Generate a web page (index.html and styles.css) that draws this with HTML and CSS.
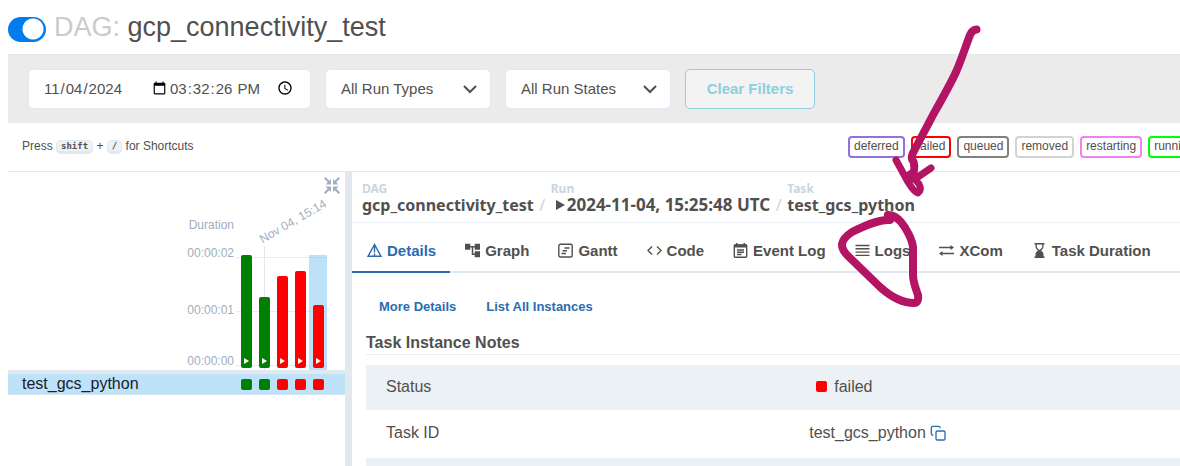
FILE: index.html
```html
<!DOCTYPE html>
<html lang="en">
<head>
<meta charset="utf-8">
<title>gcp_connectivity_test</title>
<link rel="stylesheet" href="styles.css">
</head>
<body>
<header class="title-bar">
  <input class="toggle" type="checkbox" role="switch" aria-label="Pause or unpause DAG" checked>
  <h1 class="title"><span class="title-prefix">DAG:</span> gcp_connectivity_test</h1>
</header>

<form class="filters">
  <div class="date-box">
    <input class="date-input" type="date" aria-label="Base date" value="2024-11-04">
    <input class="time-input" type="time" aria-label="Base time" step="1" value="15:32:26">
  </div>
  <div class="select-box">
    <select class="select" aria-label="Run types"><option>All Run Types</option></select>
    <svg class="chevron" viewBox="0 0 14 9"><path d="M1 1l6 6 6-6"/></svg>
  </div>
  <div class="select-box">
    <select class="select" aria-label="Run states"><option>All Run States</option></select>
    <svg class="chevron" viewBox="0 0 14 9"><path d="M1 1l6 6 6-6"/></svg>
  </div>
  <button class="clear" type="button">Clear Filters</button>
</form>

<div class="legend">
  <p class="shortcuts">Press <kbd class="key">shift</kbd> + <kbd class="key">/</kbd> for Shortcuts</p>
  <div class="states">
    <span class="state deferred">deferred</span>
    <span class="state failed">failed</span>
    <span class="state queued">queued</span>
    <span class="state removed">removed</span>
    <span class="state restarting">restarting</span>
    <span class="state running">running</span>
  </div>
</div>

<main class="panes">
  <section class="grid-pane">
    <div class="grid-tools">
      <button class="collapse" type="button" aria-label="Collapse">
        <svg viewBox="0 0 16 17" width="16" height="17"><path class="tips" d="M7 2v5.500H1.500zM9 2v5.500h5.500zM7 15V9.500H1.500zM9 15V9.500h5.500z"/><path class="rays" d="M.700.700l4 4M15.300.700l-4 4M.700 16.300l4-4M15.300 16.300l-4-4"/></svg>
      </button>
    </div>
    <div class="chart">
      <div class="axis">
        <span>Duration</span>
        <span>00:00:02</span>
        <span>00:00:01</span>
        <span>00:00:00</span>
      </div>
      <div class="plot">
        <div class="lines"><i class="line"></i><i class="line"></i><i class="line"></i></div>
        <span class="run-date">Nov 04, 15:14</span>
        <div class="slot"><button class="bar ok" type="button" aria-label="Run 1" style="height:113px"></button></div>
        <div class="slot ticked"><button class="bar ok" type="button" aria-label="Run 2" style="height:71px"></button></div>
        <div class="slot"><button class="bar bad" type="button" aria-label="Run 3" style="height:92px"></button></div>
        <div class="slot"><button class="bar bad" type="button" aria-label="Run 4" style="height:97px"></button></div>
        <div class="slot selected"><button class="bar bad" type="button" aria-label="Run 5" style="height:63px"></button></div>
      </div>
    </div>
    <div class="task-row">
      <span class="task-name">test_gcs_python</span>
      <div class="task-cells">
        <i class="cell ok"></i><i class="cell ok"></i><i class="cell bad"></i><i class="cell bad"></i><i class="cell bad"></i>
      </div>
    </div>
  </section>

  <section class="detail-pane">
    <nav class="crumbs" aria-label="Breadcrumb">
      <a class="crumb" href="#dag"><span class="crumb-label">DAG</span><span class="crumb-text">gcp_connectivity_test</span></a>
      <span class="slash">/</span>
      <a class="crumb" href="#run"><span class="crumb-label">Run</span><span class="crumb-text crumb-run"><svg class="play" viewBox="0 0 9 10"><path d="M0 0l9 5-9 5z"/></svg>2024-11-04, 15:25:48 UTC</span></a>
      <span class="slash">/</span>
      <a class="crumb" href="#task"><span class="crumb-label">Task</span><span class="crumb-text">test_gcs_python</span></a>
    </nav>
    <div class="tabs" role="tablist">
      <button class="tab active" role="tab" aria-selected="true"><svg viewBox="0 0 15 15"><path class="stroke" d="M7.500 1.500L1 13.300h13zM7.500 3v6.500"/><path class="stroke" d="M7.500 10.500v3"/></svg>Details</button>
      <button class="tab" role="tab"><svg viewBox="2 2 20 20"><path d="M22 11V3h-7v3H9V3H2v8h7V8h2v10h4v3h7v-8h-7v3h-2V8h2v3z"/></svg>Graph</button>
      <button class="tab" role="tab"><svg viewBox="0 0 15 15"><rect class="stroke" x=".8" y="1.300" width="13.400" height="12.700" rx="1.500"/><path class="stroke" d="M6.500 5h5M4.500 7.700h4.500M3.500 10.500H8"/></svg>Gantt</button>
      <button class="tab" role="tab"><svg viewBox="0 0 15 15"><path class="stroke" d="M5 3.500L1 7.500l4 4M10 3.500l4 4-4 4"/></svg>Code</button>
      <button class="tab" role="tab"><svg viewBox="0 0 15 15"><rect class="stroke" x="1.300" y="2" width="12.400" height="12.200" rx="1"/><path d="M1 1.500h13v3H1zM3 0h1.500v2H3zM10.500 0H12v2h-1.500z"/><path class="stroke" d="M4 7h7M4 9.300h7M4 11.500h4.500"/></svg>Event Log</button>
      <button class="tab" role="tab"><svg viewBox="0 0 15 15"><path class="stroke" d="M.5 2.500h14M.5 5.800h14M.5 9.100h14M.5 12.400h14"/></svg>Logs</button>
      <button class="tab" role="tab"><svg viewBox="0 0 15 15"><path class="stroke" d="M0 4.500h13M2 10.500h13"/><path d="M11.500 2l3.500 2.500L11.500 7zM3.500 8L0 10.500 3.500 13z"/></svg>XCom</button>
      <button class="tab" role="tab"><svg viewBox="0 0 15 15"><path d="M2.500 0h10v1.500h-1V4c0 1.500-1.500 2.700-2.500 3.500 1 .8 2.500 2 2.500 3.500v2.500h1V15h-10v-1.500h1V11c0-1.500 1.500-2.700 2.500-3.500C5 6.700 3.500 5.500 3.500 4V1.500h-1zM4.800 1.500V4c0 .8 1 1.700 2.700 3 1.700-1.300 2.700-2.200 2.700-3V1.500z" fill-rule="evenodd"/></svg>Task Duration</button>
    </div>
    <div class="detail-body">
      <div class="links">
        <a class="link" href="#more">More Details</a>
        <a class="link" href="#list">List All Instances</a>
      </div>
      <h2 class="notes">Task Instance Notes</h2>
      <table class="facts">
        <tbody>
          <tr><th scope="row">Status</th><td><span class="value"><i class="cell bad status-dot"></i>failed</span></td></tr>
          <tr><th scope="row">Task ID</th><td><span class="value">test_gcs_python<button class="copy" type="button" aria-label="Copy"><svg viewBox="0 0 24 24" width="16" height="16"><rect x="9" y="9" width="13.500" height="13.500" rx="2"/><path d="M5 15H4a2 2 0 0 1-2-2V4a2 2 0 0 1 2-2h9a2 2 0 0 1 2 2v1"/></svg></button></span></td></tr>
          <tr class="next-row"><td></td><td></td></tr>
        </tbody>
      </table>
    </div>
  </section>
</main>

<svg class="ink" viewBox="0 0 1180 466" width="1180" height="466" aria-hidden="true">
  <path d="M976.500 29.500Q972 30 970 35C965 48 961 61 956 72C950 85 942 99 933 115L914 151Q911 156 912 159C915 163 915 170 912 178"/>
  <path class="ink-head" d="M896 160L908 182Q914 192 918 193Q922 190 919 184Q916 180 913 178M931 168L915 179L910 174"/>
  <path d="M888 215L890 220C878 219 862 227 852 232C840 240 839 247 848 256L880 287C890 296 901 303 914 303Q919 303 918 295C915 286 913 282 913 275L913 247C912 239 906 228 901 222Q895 215 888 215"/>
</svg>
</body>
</html>
```
FILE: styles.css
```css
* { box-sizing: border-box; }

body {
  position: relative;
  display: flex;
  flex-direction: column;
  min-height: 100vh;
  margin: 0;
  padding-left: 8px;
  overflow: hidden;
  background: #fff;
  color: #51504f;
  font-family: "Liberation Sans", Arial, sans-serif;
  font-size: 16px;
}

button { font-family: inherit; cursor: pointer; }
a { color: inherit; text-decoration: none; }

.title-bar {
  display: flex;
  align-items: center;
  gap: 8px;
  height: 54px;
}
.toggle {
  appearance: none;
  width: 38px;
  height: 25px;
  margin: 4px 0 0;
  border-radius: 13px;
  background: radial-gradient(circle at 25px 12px, #fff 10px, #017cee 11px);
}
.title { margin: 0; font-size: 27px; font-weight: 400; line-height: 32px; }
.title-prefix { color: #cbcbcb; }

.filters {
  display: flex;
  align-items: center;
  gap: 14px;
  height: 69px;
  padding-left: 20px;
  border-top: 1px solid #e2e8f0;
  background: #ebebeb;
}
.date-box, .select-box {
  display: flex;
  align-items: center;
  height: 40px;
  border: 1px solid #e2e8f0;
  border-radius: 5px;
  background: #fff;
}
.date-box { width: 283px; padding: 0 14px 2px; }
.date-input, .time-input {
  padding: 0;
  border: 0;
  background: none;
  color: inherit;
  font: 15px "Liberation Sans", Arial, sans-serif;
}
.date-input { width: 126px; }
.time-input { width: 127px; }
.select-box { position: relative; width: 166px; }
.select {
  appearance: none;
  width: 100%;
  height: 100%;
  padding: 0 15px 2px;
  border: 0;
  background: none;
  color: inherit;
  font: 15px "Liberation Sans", Arial, sans-serif;
}
.chevron {
  position: absolute;
  right: 13px;
  width: 14px;
  height: 9px;
  fill: none;
  stroke: #51504f;
  stroke-width: 2;
  pointer-events: none;
}
.clear {
  width: 130px;
  height: 40px;
  padding-bottom: 3px;
  border: 1px solid #8cd0dc;
  border-radius: 5px;
  background: #f3f3f3;
  color: #8cd0dc;
  font-size: 15px;
  font-weight: 700;
}

.legend {
  display: grid;
  grid-template-columns: 1fr 332px;
  align-items: center;
  height: 49px;
  padding-left: 14px;
  border-bottom: 1px solid #e2e8f0;
  font-size: 12px;
}
.shortcuts { margin: 0; padding-bottom: 2px; line-height: 16px; }
.key {
  padding: 0 4px;
  border: 1px solid #e2e8f0;
  border-bottom-width: 3px;
  border-radius: 5px;
  background: #edf2f7;
  font: 700 9px "DejaVu Sans Mono", monospace;
  vertical-align: 1px;
}
.states { display: flex; gap: 6px; overflow: hidden; }
.state {
  flex: none;
  height: 22px;
  padding: 0 4px;
  border: 2px solid;
  border-radius: 4px;
  line-height: 17px;
}
.deferred { border-color: mediumpurple; }
.failed { border-color: red; }
.queued { border-color: gray; }
.removed { border-color: lightgrey; }
.restarting { border-color: violet; }
.running { border-color: lime; }

.panes { display: flex; flex: 1; }
.grid-pane { flex: 0 0 344px; border-right: 7px solid #e2e8f0; }
.grid-tools { display: flex; justify-content: flex-end; padding: 5px 5px 0 0; }
.collapse { display: flex; padding: 0; border: 0; background: none; }
.tips { fill: #a0aec0; }
.rays { stroke: #a0aec0; stroke-width: 2; }

.chart {
  display: flex;
  justify-content: flex-end;
  gap: 2px;
  height: 180px;
  padding-right: 18px;
  border-bottom: 4px solid #e2e8f0;
  color: #a0aec0;
  font-size: 12px;
}
.axis {
  display: grid;
  grid-template-rows: 28px 57px 51px 16px;
  align-content: end;
  padding-bottom: 1px;
  line-height: 16px;
  text-align: right;
}
.plot { position: relative; display: flex; align-items: flex-end; padding-left: 1px; }
.lines {
  position: absolute;
  inset: auto 0 4px 0;
  display: flex;
  flex-direction: column;
  justify-content: space-between;
  height: 109px;
}
.line { height: 1px; background: #e6eaf1; }
.run-date {
  position: absolute;
  left: 28px;
  top: 38px;
  line-height: 14px;
  white-space: nowrap;
  transform: rotate(-30deg);
  transform-origin: 0 100%;
}
.slot {
  position: relative;
  display: flex;
  align-items: flex-end;
  justify-content: center;
  width: 18px;
  height: 115px;
  padding-bottom: 2px;
}
.slot.selected { background: rgba(144, 205, 244, .6); }
.ticked { height: 124px; background: linear-gradient(#e2e8f0, #e2e8f0) center / 1px 100% no-repeat; }
.ok { background: green; }
.bad { background: red; }
.bar {
  display: flex;
  align-items: flex-end;
  justify-content: center;
  width: 11px;
  padding: 0 0 4px 1px;
  border: 0;
  border-radius: 2px;
}
.bar::after {
  content: "";
  border: solid transparent;
  border-width: 3px 0 3px 5px;
  border-left-color: #fff;
}
.task-row {
  display: flex;
  align-items: center;
  justify-content: space-between;
  height: 21px;
  padding: 0 18px 0 14px;
  border-bottom: 1px solid #d5e5f1;
  background: #bee3f8;
  color: #1a202c;
}
.task-name { line-height: 18px; }
.task-cells { display: flex; gap: 7px; padding-right: 3px; }
.cell { width: 11px; height: 11px; border-radius: 2px; }

.detail-pane { flex: 1; min-width: 0; }
.crumbs {
  display: flex;
  align-items: flex-end;
  height: 51px;
  padding: 0 10px 8px;
  border-bottom: 1px solid #edf2f7;
  font: 700 16px/18px "Noto Sans", "Open Sans", sans-serif;
  white-space: nowrap;
}
.crumb { display: flex; flex-direction: column; }
.crumb-label { color: #cbd5e0; font-size: 12px; line-height: 14px; }
.crumb-run { display: flex; align-items: center; gap: 2px; padding-left: 5px; font-size: 17px; }
.play { width: 9px; height: 10px; fill: #51504f; }
.slash { width: 17px; color: #cbd5e0; font-weight: 400; text-align: center; }

.tabs { display: flex; height: 50px; border-bottom: 2px solid #e2e8f0; }
.tab {
  display: flex;
  flex: none;
  align-items: center;
  gap: 5px;
  height: 50px;
  padding: 6px 14px 0 15px;
  border: 0;
  border-bottom: 2px solid transparent;
  background: none;
  color: #51504f;
  font-size: 15px;
  font-weight: 700;
}
.tab svg { width: 15px; height: 15px; fill: currentColor; }
.tab .stroke { fill: none; stroke: currentColor; stroke-width: 1.4; }
.tab.active { border-bottom-color: #2b6cb0; color: #2b6cb0; }

.detail-body { padding: 26px 0 0 14px; }
.links { display: flex; gap: 30px; padding-left: 13px; }
.link { color: #2b6cb0; font-size: 13px; font-weight: 700; line-height: 16px; }
.notes {
  margin: 17px 0 10px;
  border-bottom: 1px solid #e9eef3;
  font-size: 16px;
  line-height: 22px;
}
.facts { width: 100%; border-collapse: collapse; table-layout: fixed; }
.facts tr { height: 48px; }
.facts tr:first-child { height: 45px; }
.facts tr:nth-child(odd) { background: #ecf1f5; }
.facts tr.next-row { height: 8px; }
.facts th, .facts td { padding: 0 20px 2px; font-weight: 400; text-align: left; }
.facts th { width: 52%; }
.value { display: flex; align-items: center; }
.status-dot { margin: 0 7px; }
.copy { display: flex; padding: 0; margin-left: 4px; border: 0; background: none; }
.copy svg { fill: none; stroke: #2b6cb0; stroke-width: 2; }

.ink {
  position: absolute;
  left: 0;
  top: 0;
  fill: none;
  stroke: #b31564;
  stroke-width: 8;
  stroke-linecap: round;
  stroke-linejoin: round;
  pointer-events: none;
}
.ink-head { stroke-width: 7; }
```
